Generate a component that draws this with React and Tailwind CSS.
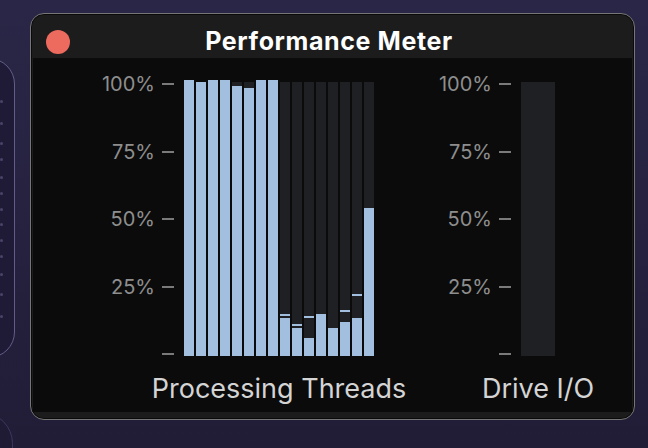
import React from 'react';

const threads = [
  { fill: 276 }, { fill: 274 }, { fill: 276 }, { fill: 276 },
  { fill: 270 }, { fill: 268 }, { fill: 276 }, { fill: 276 },
  { fill: 38, peak: 40 }, { fill: 28, peak: 30 }, { fill: 18, peak: 38 },
  { fill: 42 }, { fill: 28 }, { fill: 34, peak: 44 }, { fill: 38, peak: 60 },
  { fill: 148 },
];

const ticks = ['100%', '75%', '50%', '25%', ''];

const dots = [100, 122, 142, 158, 176, 192, 208, 223, 239, 255, 273, 293, 315];

const Axis = () => (
  <div className="flex h-[274px] flex-col justify-between py-px">
    {ticks.map((t, i) => (
      <div key={i} className="flex h-[2px] items-center">
        <span className="w-[55px] text-right text-[20px] leading-none text-[#8e8e8e]">{t}</span>
        <span className="ml-[7px] h-[2px] w-[12px] bg-[#7a7a7a]" />
      </div>
    ))}
  </div>
);

const Bar = ({ fill, peak, wide }) => (
  <div className={`relative h-[274px] ${wide ? 'w-[34px]' : 'w-[10px]'} bg-[#1e2024]`}>
    {fill > 0 && (
      <div className="absolute bottom-0 left-0 w-full bg-[#a3bfe0]" style={{ height: fill }} />
    )}
    {peak && (
      <div className="absolute left-0 h-[2px] w-full bg-[#a3bfe0]" style={{ bottom: peak }} />
    )}
  </div>
);

const Chart = ({ label, children, width }) => (
  <div className="flex flex-col">
    <div className="flex items-start">
      <Axis />
      <div className="ml-[10px] flex gap-[2px]">{children}</div>
    </div>
    <div className="ml-[84px] mt-[19px] flex justify-center" style={{ width }}>
      <span className="whitespace-nowrap text-[27px] leading-[27px] text-[#d4d4d4]">{label}</span>
    </div>
  </div>
);

export default function App() {
  return (
    <div
      className="relative h-[448px] w-[648px] overflow-hidden bg-gradient-to-b from-[#2a2647] to-[#211d37] pl-[30px] pt-[13px]"
      style={{ fontFamily: 'Inter, "Noto Sans", sans-serif' }}
    >
      {/* desktop panels peeking in from the left */}
      <div className="absolute -left-[40px] top-[58px] h-[300px] w-[55px] rounded-[26px] border border-[#625d88] bg-[#1f1b36]" />
      {dots.map((y) => (
        <div key={y} className="absolute left-0 h-[3px] w-[3px] rounded-full bg-[#4a4568]" style={{ top: y }} />
      ))}
      <div className="absolute -left-[50px] top-[412px] h-[100px] w-[63px] rounded-[34px] border border-[#3d3860] bg-[#1f1b34]" />

      {/* window */}
      <div className="relative flex h-[407px] w-[605px] flex-col overflow-hidden rounded-[14px] border border-[#767676] bg-[#1c1c1c] shadow-[inset_0_0_0_1px_#0a0a0a]">
        <div className="relative flex h-[44px] shrink-0 items-start">
          <div className="ml-[15px] mt-[16px] h-[24px] w-[24px] rounded-full bg-[#ed6a5e]" />
          <div className="absolute left-0 right-[7px] top-[15px] text-center text-[25px] font-bold leading-[25px] tracking-[0.6px] text-white">
            Performance Meter
          </div>
        </div>
        <div className="mx-[2px] flex h-[354px] shrink-0 bg-[#0b0b0b] pl-[67px] pt-[24px]">
          <Chart label="Processing Threads" width={190}>
            {threads.map((b, i) => (
              <Bar key={i} fill={b.fill} peak={b.peak} />
            ))}
          </Chart>
          <div className="ml-[63px]">
            <Chart label="Drive I/O" width={34}>
              <Bar fill={0} wide />
            </Chart>
          </div>
        </div>
      </div>
    </div>
  );
}
